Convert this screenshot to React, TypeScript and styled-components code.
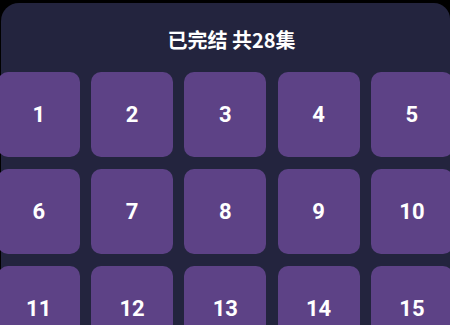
import * as React from "react";
import styled, { createGlobalStyle } from "styled-components";

const GlobalStyle = createGlobalStyle`
  html, body {
    margin: 0;
    padding: 0;
    background: #000;
  }
  body {
    width: 450px;
    height: 325px;
    overflow: hidden;
  }
`;

const colors = {
  PANEL: "#23243e",
  TILE: "#5d4286",
  TEXT: "#ffffff",
};

const Panel = styled.div`
  margin: 3px 0 0 1px;
  height: 322px;
  background: ${colors.PANEL};
  border-radius: 18px 16px 0 0;
`;

const Header = styled.div`
  height: 69px;
  display: flex;
  align-items: center;
  justify-content: center;
  padding: 3px 0 0 12px;
  box-sizing: border-box;
  color: ${colors.TEXT};
  font-family: "Noto Sans CJK SC", "Noto Sans", sans-serif;
  font-size: 20px;
  font-weight: 700;
`;

const EpisodeGrid = styled.div`
  display: grid;
  grid-template-columns: repeat(5, 82px);
  grid-auto-rows: 85px;
  column-gap: 11.3px;
  row-gap: 12px;
  margin-left: -3.3px;
`;

const EpisodeTile = styled.button`
  display: flex;
  align-items: center;
  justify-content: center;
  border: none;
  padding: 0;
  border-radius: 10px;
  background: ${colors.TILE};
  color: ${colors.TEXT};
  font-family: Roboto, "Liberation Sans", sans-serif;
  font-size: 22px;
  font-weight: 700;
  cursor: pointer;
`;

const TOTAL_EPISODES = 28;

export default function App(): JSX.Element {
  const episodes = Array.from({ length: TOTAL_EPISODES }, (_, i) => i + 1);
  return (
    <>
      <GlobalStyle />
      <Panel>
        <Header>已完结 共{TOTAL_EPISODES}集</Header>
        <EpisodeGrid>
          {episodes.map(n => (
            <EpisodeTile key={n}>{n}</EpisodeTile>
          ))}
        </EpisodeGrid>
      </Panel>
    </>
  );
}
